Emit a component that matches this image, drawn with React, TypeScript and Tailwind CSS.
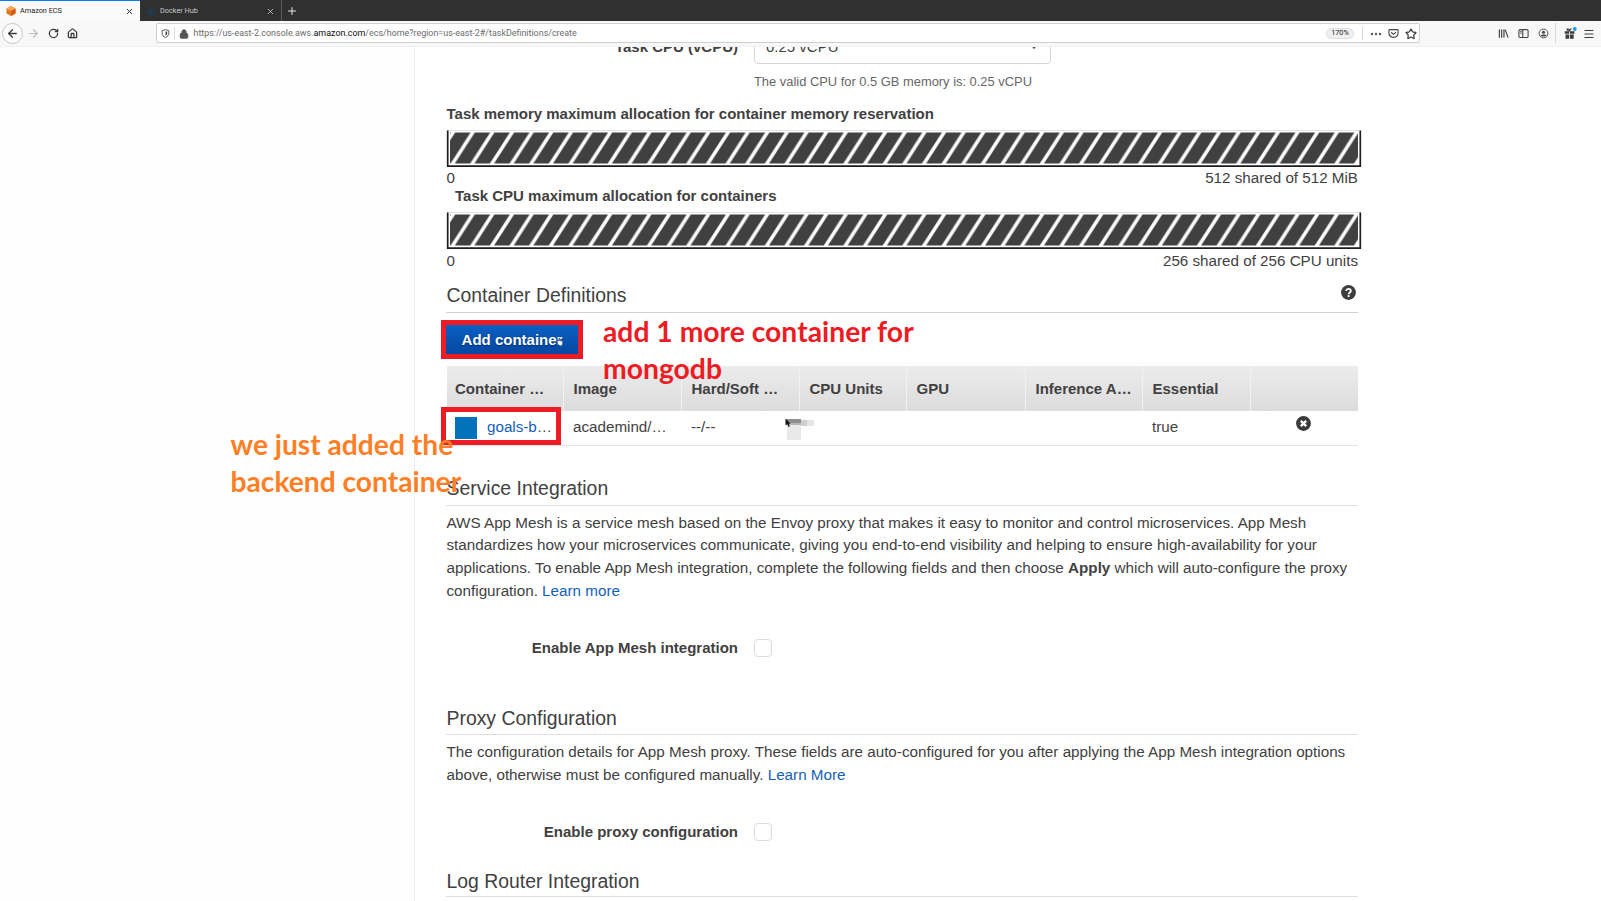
import type { ReactNode } from "react";
import { ArrowLeft, ArrowRight, House, Lock, Menu, Plus, RotateCw, Star, X } from "lucide-react";

function BrowserTabs() {
  return (
    <div className="flex h-[21px] bg-[#303030] font-['Roboto',sans-serif] text-[7.3px]">
      <div className="flex w-[140px] items-center border-t border-[#0a7cf0] bg-[#fafafa] pr-[6px] pl-[6px] text-[#1c1c1c]">
        <svg viewBox="0 0 20 20" className="size-[10px]">
          <path d="M10 0 19 5v10l-9 5-9-5V5z" fill="#e8761c" />
          <path d="M10 0 19 5l-9 5-9-5z" fill="#f8a85a" />
          <path d="M10 10 19 5v10l-9 5z" fill="#cf5f12" />
        </svg>
        <span className="ml-[4px] flex-1">Amazon ECS</span>
        <X className="size-[9px]" strokeWidth={2.4} />
      </div>
      <div className="flex w-[142px] items-center border-r border-[#5c5c5c] pt-px pr-[6px] pl-[7px] text-[#c9c9c9]">
        <svg viewBox="0 0 20 14" className="h-[7px] w-[10px]" fill="#1c3c58">
          <path d="M0 7h16c1-2 2-2 4-2-1 2-2 3-4 3-2 4-5 6-9 6S0 11 0 7zM3 3h8v3H3zM8 0h3v3H8z" />
        </svg>
        <span className="ml-[3px] flex-1">Docker Hub</span>
        <X className="size-[9px]" strokeWidth={2.2} />
      </div>
      <div className="flex items-center pl-[4px] text-[#e8e8e8]">
        <Plus className="size-[12px]" strokeWidth={2} />
      </div>
    </div>
  );
}

function Toolbar() {
  return (
    <div className="flex h-[26px] items-start border-b border-[#f0f0f0] bg-[#f8f8f8] font-['Roboto',sans-serif] text-[#3a3a3a]">
      <div className="flex h-[24px] w-[156px] items-center pl-[2px]">
        <div className="flex size-[21px] items-center justify-center rounded-full border border-[#c4c4c4] bg-white">
          <ArrowLeft className="size-[13px]" strokeWidth={2.4} />
        </div>
        <ArrowRight className="ml-[4px] size-[13px] text-[#bcbcbc]" strokeWidth={2.2} />
        <RotateCw className="ml-[8px] size-[11px]" strokeWidth={2.8} />
        <House className="ml-[8px] size-[11px]" strokeWidth={2.8} />
      </div>
      <div className="mt-[2px] flex h-[20px] w-[1264px] items-center rounded-[2px] border border-[#cfcfcf] bg-white pt-px pl-[4px]">
        <svg viewBox="0 0 16 16" className="size-[9px]" fill="none" stroke="#444" strokeWidth="1.6">
          <path d="M8 1 14 3v4c0 4-2 6.500-6 8-4-1.500-6-4-6-8V3z" />
          <path d="M8 4v8c2-1 3-2.500 3-5V5z" fill="#444" stroke="none" />
        </svg>
        <div className="ml-[4px] h-[13px] w-px bg-[#d8d8d8]" />
        <Lock className="ml-[4px] size-[10px] fill-[#555] text-[#555]" strokeWidth={2.4} />
        <div className="ml-[4.5px] flex-1 pt-px text-[8.93px] whitespace-nowrap text-[#6c6c6c]">
          https://us-east-2.console.aws.<span className="text-[#0c0c0c]">amazon.com</span>/ecs/home?region=us-east-2#/taskDefinitions/create
        </div>
        <div className="flex h-[11px] w-[28px] items-center justify-center rounded-full border border-[#dedede] bg-[#efefef] text-[7.3px] text-[#1c1c1c]">170%</div>
        <div className="ml-[8px] h-[13px] w-px bg-[#d8d8d8]" />
        <svg viewBox="0 0 12 12" className="ml-[7px] size-[12px]" fill="#555">
          <circle cx="2" cy="6" r="1.200" /><circle cx="6" cy="6" r="1.200" /><circle cx="10" cy="6" r="1.200" />
        </svg>
        <svg viewBox="0 0 12 12" className="ml-[6px] size-[11px]" fill="none" stroke="#444" strokeWidth="1.200" strokeLinecap="round" strokeLinejoin="round">
          <path d="M1.800 1.800h8.400c.5 0 .8.300.8.800V5c0 3-2 5.200-5 5.200S1 8 1 5V2.600c0-.5.300-.8.800-.8z" />
          <path d="M3.600 4.800 6 7l2.400-2.200" />
        </svg>
        <Star className="mr-[2px] ml-[6px] size-[12px]" strokeWidth={2.4} />
      </div>
      <div className="flex h-[25px] flex-1 items-center pl-[78px]">
        <svg viewBox="0 0 12 12" className="size-[11px]" fill="none" stroke="#444" strokeWidth="1.300" strokeLinecap="round">
          <path d="M1.500 2v8M4 2v8M6.500 2v8M8 2.300 10.800 10" />
        </svg>
        <svg viewBox="0 0 12 12" className="ml-[9px] size-[11px]" fill="none" stroke="#444" strokeWidth="1.200">
          <rect x="1" y="1.800" width="10" height="8.600" rx="1.200" />
          <path d="M5.200 2v8.200M2.500 4h1.500M2.500 5.700h1.500" />
        </svg>
        <svg viewBox="0 0 12 12" className="ml-[9px] size-[11px]">
          <circle cx="6" cy="6" r="4.800" fill="none" stroke="#444" />
          <circle cx="6" cy="4.600" r="1.700" fill="#444" />
          <path d="M2.800 8.200c.8-1.600 5.600-1.600 6.400 0C8.300 9.600 3.700 9.600 2.800 8.200z" fill="#444" />
        </svg>
        <div className="ml-[6px] h-[21px] w-px bg-[#dadada]" />
        <svg viewBox="0 0 13 13" className="ml-[8px] size-[13px]" fill="#3c3c3c">
          <path d="M.8 4.200h4.400v2.600H.8zM6 4.200h4.400v2.600H6zM1.500 7.500h3.700v4.300H1.500zM6 7.500h3.700v4.300H6z" />
          <path d="M5.600 4.200C3 4 2.600 2 3.600 1.800c1-.2 1.800 1 2 2.400.2-1.400 1-2.600 2-2.400" fill="none" stroke="#3c3c3c" strokeWidth="1.100" />
          <circle cx="10.800" cy="2" r="1.900" fill="#169cf2" />
        </svg>
        <Menu className="ml-[6px] size-[12px]" strokeWidth={2.4} />
      </div>
    </div>
  );
}

function AllocationBar({ id }: { id: string }) {
  return (
    <svg viewBox="0 0 916 38" className="block h-[38px] w-[916px]">
      <defs>
        <pattern id={id} x="8.800" width="19.640" height="31" y="2.500" patternUnits="userSpaceOnUse">
          <path d="M-19.640 31h15.400l20-31h-15.400zM0 31h15.400l20-31h-15.400zM-39.280 31h15.400l20-31h-15.400z" fill="#404040" />
        </pattern>
      </defs>
      <path d="M1 .5h914" stroke="#e4e4e4" />
      <rect x="4" y="2.500" width="908" height="31" fill={`url(#${id})`} />
      <path d="M1.700.5v35.600h912.600V.5" fill="none" stroke="#1c1c1c" strokeWidth="1.700" />
    </svg>
  );
}

function AllocationLabels({ total }: { total: string }) {
  return (
    <div className="flex h-full justify-between pr-[3px] pl-[0.5px]">
      <span>0</span>
      <span>{total}</span>
    </div>
  );
}

function Heading({ children }: { children: ReactNode }) {
  return <h2 className="pl-[0.5px] text-[19.4px] leading-[28px]">{children}</h2>;
}

function CheckField({ label }: { label: string }) {
  return (
    <div className="flex h-[20px] items-center text-[15px]">
      <label className="w-[292px] text-right font-bold">{label}</label>
      <div className="ml-[16px] size-[18px] rounded-[4px] border border-[#dcdcdc] bg-white" />
    </div>
  );
}

const columns = "grid grid-cols-[117px_118px_118px_107px_119px_117px_108px_107px]";
const headers = ["Container …", "Image", "Hard/Soft …", "CPU Units", "GPU", "Inference A…", "Essential", ""];

function ContainerTable() {
  return (
    <div className="mt-[12px] ml-px w-[911px] text-[15px]">
      <div className={`${columns} h-[45px] bg-linear-to-b from-[#ececec] to-[#dcdcdc] font-bold`}>
        {headers.map((h, i) => (
          <div key={i} className="flex items-center border-r border-[#f2f2f2] pt-[2px] pl-[9.500px] whitespace-nowrap first:pl-[8px] last:border-r-0">
            {h}
          </div>
        ))}
      </div>
      <div className={`${columns} relative h-[35px] border-b border-[#e4e4e4] text-[15.2px] leading-[32px] whitespace-nowrap`}>
        <div className="flex pl-[8px]">
          <div className="mt-[6px] mr-[10px] size-[22px] bg-[#0073bb]" />
          <span>
            <a className="text-[#1560b8]">goals-b</a>…
          </span>
        </div>
        <div className="pl-[9px]">academind/…</div>
        <div className="pl-[9px]">--/--</div>
        <div />
        <div />
        <div />
        <div className="pl-[9px]">true</div>
        <div className="flex pt-[5px] pl-[44.5px]">
          <svg viewBox="0 0 14 14" className="size-[15px]">
            <circle cx="7" cy="7" r="6.900" fill="#3c3c3c" />
            <path d="m4.500 4.500 5 5m0-5-5 5" stroke="#fff" strokeWidth="2.200" />
          </svg>
        </div>
        <div className="absolute top-[-4px] left-[-6px] h-[38px] w-[120px] border-[5px] border-[#ed1c24]" />
        <svg viewBox="0 0 30 23" className="absolute top-[7px] left-[338px] h-[23px] w-[30px]">
          <path d="M2 7h14v15H2z" fill="#e9e9e9" />
          <path d="M1 1h15v6H1z" fill="#8f8f8f" />
          <path d="M1 5h15v2H1z" fill="#b4b4b4" />
          <path d="M16 2h6v6h-6z" fill="#cfcfcf" />
          <path d="M22 2h7v6h-7z" fill="#e6e6e6" />
          <path d="M.5.5v7l1.700-1.400L3.500 9l1.300-.7L3.600 5.700h2z" fill="#111" />
        </svg>
      </div>
    </div>
  );
}

export default function App() {
  return (
    <div className="flex h-[901px] w-[1601px] flex-col overflow-hidden bg-white">
      <BrowserTabs />
      <Toolbar />
      <div className="flex min-h-0 flex-1 overflow-hidden">
        <aside className="w-[413.5px] shrink-0 bg-[#fefefe]" />
        <main className="relative -mt-[17px] w-[1187px] border-l border-[#eeeeee] pl-[31.5px] font-['Liberation_Sans',Arial,sans-serif] text-[15.2px] text-[#414141]">
          <div className="flex h-[34px] items-center text-[15px]">
            <span className="w-[292px] text-right font-bold">Task CPU (vCPU)</span>
            <div className="ml-[16px] flex h-[34px] w-[297px] items-center justify-between rounded-[4px] border border-[#d8d8d8] pr-[12px] pl-[11px] text-[15px]">
              <span>0.25 vCPU</span>
              <svg viewBox="0 0 8 6" className="h-[5px] w-[8px]" fill="#444">
                <path d="M1 1h6L4 5z" />
              </svg>
            </div>
          </div>
          <p className="mt-[7px] pl-[308px] text-[12.9px] leading-[21px] text-[#666]">The valid CPU for 0.5 GB memory is: 0.25 vCPU</p>

          <h3 className="mt-[12px] pl-[0.5px] text-[15px] leading-[20px] font-bold">Task memory maximum allocation for container memory reservation</h3>
          <div className="mt-[6px]">
            <AllocationBar id="memory-stripes" />
          </div>
          <div className="h-[20px] w-[915px] leading-[20px]">
            <AllocationLabels total="512 shared of 512 MiB" />
          </div>
          <h3 className="-mt-[2px] pl-[9px] text-[15px] leading-[20px] font-bold">Task CPU maximum allocation for containers</h3>
          <div className="mt-[6px]">
            <AllocationBar id="cpu-stripes" />
          </div>
          <div className="h-[21px] w-[915px] leading-[21px]">
            <AllocationLabels total="256 shared of 256 CPU units" />
          </div>

          <div className="mt-[10px] flex w-[912px] justify-between border-b border-[#cfcfcf] pb-[3px]">
            <Heading>Container Definitions</Heading>
            <svg viewBox="0 0 14 14" className="mt-[4px] mr-[2px] size-[15px]">
              <circle cx="7" cy="7" r="6.900" fill="#3c3c3c" />
              <path d="M4.900 5.500c0-2.600 4.300-2.500 4.300 0C9.200 7 7.100 6.900 7.100 8.600" fill="none" stroke="#fff" strokeWidth="1.700" />
              <rect x="6.200" y="9.500" width="1.800" height="1.700" fill="#fff" />
            </svg>
          </div>

          <div className="relative mt-[12px] flex h-[29px] w-[132px] items-center justify-center bg-linear-to-b from-[#0a5fc4] to-[#0548a0] pt-[2px]">
            <span className="text-[15px] font-bold text-white [text-shadow:0_1px_2px_#002b66]">Add container</span>
            <svg viewBox="0 0 8 10" className="absolute top-[12px] left-[110px] h-[10px] w-[8px]">
              <path d="M1 2.500 3 4V1l1 3 1.500-2 .2 2.500L7 3.500 6.500 8 4 9.300 1.500 6.500z" fill="#fff" stroke="#1b4f94" strokeWidth=".8" />
            </svg>
            <div className="absolute -top-[5px] -left-[5px] h-[39px] w-[142px] border-[5px] border-[#ed1c24]" />
            <p className="absolute -top-[12px] left-[157px] z-10 w-[330px] font-['Lato',sans-serif] text-[28.3px] leading-[37px] font-bold text-[#ed1c24]">
              add 1 more container for mongodb
            </p>
          </div>

          <ContainerTable />

          <div className="mt-[28px] w-[912px] border-b border-[#dedede] pb-[3px]">
            <Heading>Service Integration</Heading>
          </div>
          <p className="mt-[5.5px] h-[90.5px] pl-[0.5px] text-[15.22px] leading-[22.8px] whitespace-nowrap">
            AWS App Mesh is a service mesh based on the Envoy proxy that makes it easy to monitor and control microservices. App Mesh
            <br />
            standardizes how your microservices communicate, giving you end-to-end visibility and helping to ensure high-availability for your
            <br />
            applications. To enable App Mesh integration, complete the following fields and then choose <b>Apply</b> which will auto-configure the proxy
            <br />
            configuration. <a className="text-[#1560b8]">Learn more</a>
          </p>
          <div className="mt-[36px]">
            <CheckField label="Enable App Mesh integration" />
          </div>

          <div className="mt-[46px] w-[912px] border-b border-[#dedede] pb-[2px]">
            <Heading>Proxy Configuration</Heading>
          </div>
          <p className="mt-[6px] h-[45px] pl-[0.5px] text-[15.23px] leading-[22.8px] whitespace-nowrap">
            The configuration details for App Mesh proxy. These fields are auto-configured for you after applying the App Mesh integration options
            <br />
            above, otherwise must be configured manually. <a className="text-[#1560b8]">Learn More</a>
          </p>
          <div className="mt-[36px]">
            <CheckField label="Enable proxy configuration" />
          </div>

          <div className="mt-[25px] w-[912px] border-b border-[#dedede] pb-px">
            <Heading>Log Router Integration</Heading>
          </div>

          <p className="absolute top-[395.5px] -left-[184px] w-[260px] font-['Lato',sans-serif] text-[28.2px] leading-[37px] font-bold text-[#ff7f27]">
            we just added the backend container
          </p>
        </main>
      </div>
    </div>
  );
}
